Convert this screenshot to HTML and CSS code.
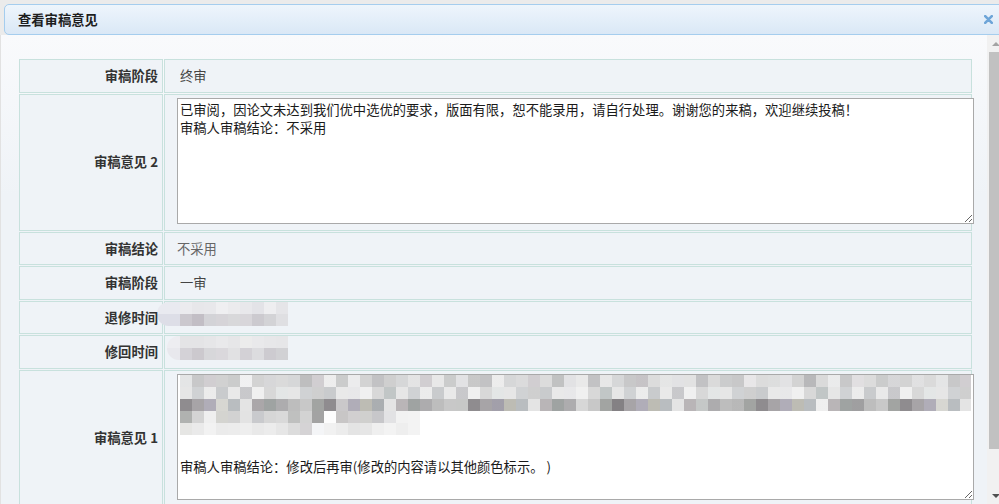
FILE: index.html
```html
<!DOCTYPE html>
<html lang="zh-CN">
<head>
    <meta charset="UTF-8">
    <meta name="viewport" content="width=device-width, initial-scale=1.0">
    <title>查看审稿意见</title>
    <link rel="stylesheet" href="styles.css">
</head>
<body>
    <div class="dialog">
        <div class="dialog-header">
            <span class="dialog-title">查看审稿意见</span>
            <a class="dialog-close" href="#" title="关闭">
                <svg width="9" height="9" viewBox="0 0 9 9"><path d="M1.2 1.2L7.8 7.8M7.8 1.2L1.2 7.8" stroke="#6ea5d8" stroke-width="2.6" stroke-linecap="round"/></svg>
            </a>
        </div>

        <div class="dialog-main">
            <div class="dialog-body">
                <table class="review-table">
                    <tr>
                        <th>审稿阶段</th>
                        <td>&nbsp;终审</td>
                    </tr>
                    <tr>
                        <th>审稿意见 2</th>
                        <td class="opinion">
                            <textarea readonly>已审阅，因论文未达到我们优中选优的要求，版面有限，恕不能录用，请自行处理。谢谢您的来稿，欢迎继续投稿！
审稿人审稿结论：不采用</textarea>
                        </td>
                    </tr>
                    <tr>
                        <th>审稿结论</th>
                        <td class="muted">不采用</td>
                    </tr>
                    <tr>
                        <th>审稿阶段</th>
                        <td>&nbsp;一审</td>
                    </tr>
                    <tr>
                        <th>退修时间</th>
                        <td><div class="mosaic-date date-back"></div></td>
                    </tr>
                    <tr>
                        <th>修回时间</th>
                        <td><div class="mosaic-date date-return"></div></td>
                    </tr>
                    <tr>
                        <th>审稿意见 1</th>
                        <td class="opinion">
                            <div class="textarea-box">
                                <!-- hidden review text -->
                                <div class="mosaic-line m1"></div>
                                <div class="mosaic-line m2"></div>
                                <div class="mosaic-line m3"></div>
                                <div class="mosaic-line m4"></div>
                                <div class="mosaic-line m5"></div>
                                <p class="conclusion">审稿人审稿结论：修改后再审(修改的内容请以其他颜色标示。 )</p>
                            </div>
                        </td>
                    </tr>
                </table>
            </div>

            <div class="scrollbar">
                <div class="sb-btn sb-up"></div>
                <div class="sb-thumb"></div>
                <div class="sb-track"></div>
                <div class="sb-btn sb-down"></div>
            </div>
        </div>
    </div>
</body>
</html>
```

FILE: styles.css
```css
body {
    margin: 0;
    background: #ebebeb;
    font-family: "Noto Sans CJK SC", "Liberation Sans", sans-serif;
    font-size: 13.3px;
    color: #333;
    overflow: hidden;
}
.dialog {
    width: 1004px;
    height: 504px;
    display: flex;
    flex-direction: column;
}
.dialog-header {
    margin: 4px 0 0 4px;
    height: 29px;
    padding: 0 10px 0 13px;
    border: 1px solid #a5cdee;
    border-radius: 5px;
    background: linear-gradient(#eef5fc, #dae8f6);
    display: flex;
    align-items: center;
    justify-content: space-between;
}
.dialog-title {
    font-weight: bold;
    color: #1e1e1e;
}
.dialog-close {
    display: flex;
}
.dialog-main {
    flex: 1;
    display: flex;
    min-height: 0;
}
.dialog-body {
    flex: 1;
    padding: 23px 14px 0 17px;
    border-left: 1px solid #e2e2e2;
    background: linear-gradient(#f9fafc, #eff3f7 160px);
    overflow: hidden;
}
.review-table {
    width: 100%;
    border-collapse: separate;
    border-spacing: 1px;
}
.review-table th, .review-table td {
    border: 1px solid #c8e1dd;
    background: #eff3f7;
    line-height: 17.5px;
    padding: 7px 12px;
    vertical-align: middle;
}
.review-table th {
    width: 138px;
    padding: 7px 4px 7px 0;
    text-align: right;
    font-weight: bold;
    color: #333;
    white-space: nowrap;
}
.review-table td {
    text-align: left;
    color: #444;
}
.review-table td.muted {
    color: #666;
}
.review-table td.opinion {
    padding: 3px 0 6px 12px;
}
.opinion textarea, .textarea-box {
    display: block;
    box-sizing: border-box;
    width: calc(100% + 3px);
    height: 126px;
    margin: 0;
    padding: 2px;
    border: 1px solid #a9a9a9;
    background: #fff;
    font-family: inherit;
    font-size: 13.3px;
    line-height: 18px;
    color: #1a1a1a;
    resize: vertical;
    outline: none;
}
.textarea-box {
    padding-top: 0;
    overflow: hidden;
}
.conclusion {
    margin: 23px 0 0;
}

/* blurred dates */
.mosaic-date {
    height: 24px;
    width: 131px;
    margin: -7px 0 0 -20px;
    border-radius: 12px 0 0 12px;
}
.date-back {
    background:
        linear-gradient(90deg, #e9eaf0 0 23px, #ebebee 23px 35px, #e7e7ea 35px 47px, #e8e8eb 47px 59px, #efeff1 59px 71px, #ebebed 71px 83px, #e8e8eb 83px 95px, #e3e3e7 95px 107px, #eeeef0 107px 119px, #e5e5e8 119px) top / 100% 12px no-repeat,
        linear-gradient(90deg, #dddee7 0 23px, #cbc8ce 23px 35px, #c2bec5 35px 47px, #d3d3d7 47px 59px, #d6d4d8 59px 71px, #d8d8da 71px 83px, #d8d6da 83px 95px, #cccacf 95px 107px, #d3d3d6 107px 119px, #dfdfe2 119px) bottom / 100% 12px no-repeat;
}
.date-return {
    width: 121px;
    margin-left: -10px;
    background:
        linear-gradient(90deg, #ededf1 0 13px, #e4e4e6 13px 25px, #e4e4e6 25px 37px, #e6e6e8 37px 49px, #e9e9eb 49px 61px, #e6e6e8 61px 73px, #ececec 73px 85px, #e9e9eb 85px 97px, #e7e7e9 97px 109px, #e6e6e8 109px) top / 100% 12px no-repeat,
        linear-gradient(90deg, #e8e8ed 0 13px, #d4d2d7 13px 25px, #ccc9ce 25px 37px, #d7d7da 37px 49px, #dad8dc 49px 61px, #e1e1e3 61px 73px, #d3d1d6 73px 85px, #dcdcdf 85px 97px, #cdcbd0 97px 109px, #d1d1d4 109px) bottom / 100% 12px no-repeat;
}

/* blurred review text */
.mosaic-line {
    height: 12px;
}
.m1 {
    background:
        repeating-linear-gradient(90deg, rgba(255,255,255,.35) 0 12px, transparent 12px 36px, rgba(0,0,0,.05) 36px 48px, transparent 48px 60px, rgba(255,255,255,.5) 60px 72px, transparent 72px 84px),
        repeating-linear-gradient(90deg, #d6d7d8 0 12px, #c8c8c9 12px 24px, #d1ced1 24px 36px, #dcdcdc 36px 48px, #cbcccc 48px 60px, #e2e2e4 60px 72px, #d3d3d3 72px 84px, #c2c2c4 84px 96px, #dadada 96px 108px);
}
.m2 {
    background:
        repeating-linear-gradient(90deg, transparent 0 24px, rgba(255,255,255,.45) 24px 36px, transparent 36px 60px, rgba(0,0,0,.06) 60px 72px),
        repeating-linear-gradient(90deg, #e6e6e6 0 12px, #d0d2d4 12px 24px, #dcdcdc 24px 36px, #c9cbcd 36px 48px, #e9e9e9 48px 60px, #d5d5d8 60px 72px, #f0f0f0 72px 84px, #d8d8d8 84px 96px, #cdd2d2 96px 108px);
}
.m3 {
    background:
        repeating-linear-gradient(90deg, transparent 0 36px, rgba(255,255,255,.4) 36px 48px, transparent 48px 72px, rgba(0,0,0,.08) 72px 84px, transparent 84px 120px),
        repeating-linear-gradient(90deg, #8f8c8f 0 12px, #a7a4a7 12px 24px, #b0adb8 24px 36px, #bdbcb4 36px 48px, #b9bdc0 48px 60px, #e4e4e4 60px 72px, #b9b5b7 72px 84px, #9fa3a2 84px 96px, #adacae 96px 108px, #bdbdbd 108px 120px, #c8c8c8 120px 132px, #a2a4a2 132px 144px);
}
.m4 {
    width: 240px;
    background: linear-gradient(90deg, #b0b2b0 0 12px, #d4d4d4 12px 24px, #efefef 24px 36px, #d4d4d0 36px 48px, #d2d2d2 48px 60px, #e3e3e3 60px 72px, #c9cacd 72px 84px, #d6d6d6 84px 96px, #d9d9d9 96px 108px, #bfc0bf 108px 120px, #d3d3d3 120px 132px, #a3a3a3 132px 144px, #fdfdfd 144px 156px, #c8c6c6 156px 168px, #d1cfd0 168px 180px, #d0d0ce 180px 192px, #c7c7ca 192px 204px, #e2e2e4 204px 216px, #f2f2f2 216px 228px, #f3f3f3 228px);
}
.m5 {
    width: 240px;
    background: linear-gradient(90deg, #e6e6e4 0 12px, #eaeaea 12px 24px, #f2f2f2 24px 36px, #ebebeb 36px 48px, #ececec 48px 60px, #eeeeee 60px 72px, #e9e9e9 72px 84px, #ececec 84px 96px, #e6e6e6 96px 108px, #dcdcdc 108px 120px, #d5d3d5 120px 132px, #f4f5f7 132px 144px, #f1f1f1 144px 156px, #ececec 156px 168px, #e4e4e4 168px 180px, #e6e6e6 180px 192px, #efefef 192px 204px, #f3f3f3 204px 216px, #eeeeee 216px 228px, #f3f3f3 228px);
}

/* scrollbar */
.scrollbar {
    width: 17px;
    background: #f1f1f1;
    display: flex;
    flex-direction: column;
}
.sb-btn {
    height: 17px;
    display: flex;
    align-items: center;
    justify-content: center;
}
.sb-btn::after {
    content: "";
    border-left: 4px solid transparent;
    border-right: 4px solid transparent;
}
.sb-up::after {
    border-bottom: 4px solid #a3a3a3;
}
.sb-down::after {
    border-top: 4px solid #505050;
}
.sb-thumb {
    height: 397px;
    margin: 0 2px;
    background: #c1c1c1;
}
.sb-track {
    flex: 1;
}
```
